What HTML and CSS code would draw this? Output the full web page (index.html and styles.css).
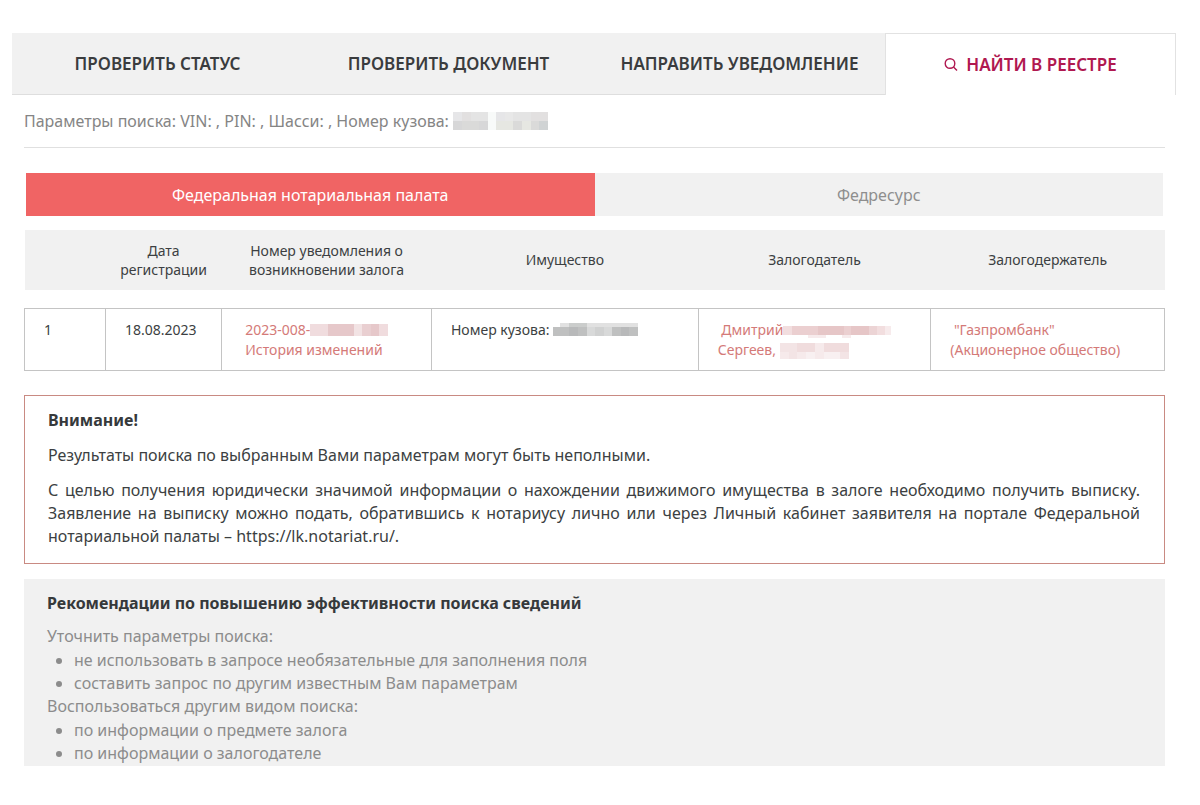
FILE: index.html
```html
<!DOCTYPE html>
<html lang="ru">
<head>
<meta charset="utf-8">
<title>Найти в реестре</title>
<link rel="stylesheet" href="styles.css">
</head>
<body>
<main class="page">
  <nav class="tabs">
    <a class="tab" href="#status">Проверить статус</a>
    <a class="tab" href="#document">Проверить документ</a>
    <a class="tab" href="#notify">Направить уведомление</a>
    <a class="tab tab-active" href="#search" aria-current="page">
      <svg class="icon" viewBox="0 0 14 14" aria-hidden="true"><circle cx="6" cy="5.5" r="4.8"/><path d="M9.5 8.9 13 12.4"/></svg>
      Найти в реестре
    </a>
  </nav>

  <div class="content">
    <p class="params">Параметры поиска: VIN: , PIN: , Шасси: , Номер кузова:
      <svg class="mask mask-params" viewBox="0 0 95 18" aria-hidden="true">
        <path fill="#e6e6e8" d="M0 0h9v9H0zM43 0h9v9h-9z"/><path fill="#e2e0e0" d="M9 0h9v9H9zM78 0h17v9H78z"/><path fill="#e4e4e4" d="M18 0h17v9H18zM60 0h18v9H60z"/><path fill="#e8e8e8" d="M52 0h8v9h-8z"/>
        <path fill="#d7d7d8" d="M0 9h9v9H0zM26 9h9v9h-9z"/><path fill="#dadad9" d="M9 9h17v9H9zM60 9h9v9h-9zM78 9h8v9h-8z"/><path fill="#e6e7e2" d="M43 9h17v9H43zM69 9h9v9h-9z"/><path fill="#d0d3d4" d="M86 9h9v9h-9z"/><path fill="#f8faf9" d="M35 0h8v18h-8z"/>
      </svg>
    </p>

    <div class="sources">
      <button class="source source-active" type="button">Федеральная нотариальная палата</button>
      <button class="source" type="button">Федресурс</button>
    </div>

    <table class="results">
      <colgroup><col class="c-num"><col class="c-date"><col class="c-notice"><col class="c-asset"><col class="c-party"><col></colgroup>
      <thead>
        <tr>
          <th></th>
          <th scope="col">Дата регистрации</th>
          <th scope="col">Номер уведомления о возникновении залога</th>
          <th scope="col">Имущество</th>
          <th scope="col">Залогодатель</th>
          <th scope="col">Залогодержатель</th>
        </tr>
      </thead>
      <tbody>
        <tr>
          <td>1</td>
          <td>18.08.2023</td>
          <td class="wide"><a href="#notice">2023-008-<svg class="mask mask-notice" viewBox="0 0 78 12" aria-hidden="true"><path fill="#f0dcde" d="M0 0h18v12H0zM69 0h9v12h-9z"/><path fill="#e6c8ca" d="M18 0h26v12H18zM61 0h8v12h-8z"/><path fill="#f2e3e4" d="M44 0h8v12h-8z"/><path fill="#e9cfd1" d="M52 0h9v12h-9z"/></svg></a><br><a href="#history">История изменений</a></td>
          <td>Номер кузова: <svg class="mask mask-asset" viewBox="0 0 85 13" aria-hidden="true"><path fill="#e1e1e1" d="M7 0h9v4H7zM34 0h51v4H34z"/><path fill="#cbcdcc" d="M16 0h18v4H16z"/><path fill="#bfc0c0" d="M0 4h16v9H0zM25 4h9v9h-9zM59 4h9v9h-9zM76 4h9v9h-9z"/><path fill="#b8b9ba" d="M16 4h9v9h-9zM68 4h8v9h-8z"/><path fill="#d8d9d9" d="M34 4h8v9h-8zM51 4h8v9h-8z"/><path fill="#d0d1d1" d="M42 4h9v9h-9z"/></svg></td>
          <td><a href="#pledger">&nbsp;Дмитрий<svg class="mask mask-name" viewBox="0 0 108 12" aria-hidden="true"><path fill="#f2dedf" d="M0 0h9v9H0zM94 0h8v9h-8z"/><path fill="#ebcfd0" d="M9 0h26v9H9zM61 0h7v9h-7z"/><path fill="#e6c6c7" d="M35 0h26v9H35zM68 0h18v9H68z"/><path fill="#ecd4d5" d="M86 0h8v9h-8z"/><path fill="#f7ebec" d="M102 0h6v9h-6zM25 9h18v3H25zM59 9h9v3h-9z"/></svg><br>Сергеев, <svg class="mask mask-surname" viewBox="0 0 69 16" aria-hidden="true"><path fill="#f0dcdd" d="M17 0h18v9H17zM44 0h25v9H44z"/><path fill="#f3e4e5" d="M0 0h17v9H0zM9 9h8v7H9zM60 9h9v7h-9z"/><path fill="#f6eaeb" d="M0 9h9v7H0zM35 0h9v9h-9zM17 9h9v7h-9zM35 9h9v7h-9z"/><path fill="#f8f0f1" d="M26 9h9v7h-9zM44 9h16v7H44z"/></svg></a></td>
          <td><a href="#pledgee">&nbsp;"Газпромбанк"<br>(Акционерное общество)</a></td>
        </tr>
      </tbody>
    </table>

    <section class="notice">
      <h2>Внимание!</h2>
      <p>Результаты поиска по выбранным Вами параметрам могут быть неполными.</p>
      <p>С целью получения юридически значимой информации о нахождении движимого имущества в залоге необходимо получить выписку. Заявление на выписку можно подать, обратившись к нотариусу лично или через Личный кабинет заявителя на портале Федеральной нотариальной палаты – https://lk.notariat.ru/.</p>
    </section>

    <section class="tips">
      <h2>Рекомендации по повышению эффективности поиска сведений</h2>
      <p>Уточнить параметры поиска:</p>
      <ul>
        <li>не использовать в запросе необязательные для заполнения поля</li>
        <li>составить запрос по другим известным Вам параметрам</li>
      </ul>
      <p>Воспользоваться другим видом поиска:</p>
      <ul>
        <li>по информации о предмете залога</li>
        <li>по информации о залогодателе</li>
      </ul>
    </section>
  </div>
</main>
</body>
</html>
```
FILE: styles.css
```css
* { box-sizing: border-box; }

body {
  margin: 0;
  background: #fff;
  color: #3c3f42;
  font: 16px/23px "Noto Sans", "Open Sans", sans-serif;
}

h2, p, ul { margin: 0; }
h2 { font-size: 16px; line-height: 23px; font-weight: 700; color: #36393b; }

.page { padding: 33px 24px 39px 12px; }

.tabs {
  display: grid;
  grid-template-columns: repeat(4, 1fr);
}
.tab {
  display: flex;
  align-items: center;
  justify-content: center;
  gap: 8px;
  height: 62px;
  background: #f1f1f1;
  border-bottom: 1px solid #dedede;
  color: #3a3c3e;
  font-size: 17px;
  font-weight: 600;
  text-transform: uppercase;
  text-decoration: none;
}
.tab-active {
  background: #fff;
  border: 1px solid #e2e2e2;
  border-bottom: 0;
  color: #b01850;
}
.icon {
  width: 14px;
  height: 14px;
  fill: none;
  stroke: currentColor;
  stroke-width: 1.4;
}

.content { padding: 0 11px 0 12px; }

.params {
  padding: 15px 0 14px;
  border-bottom: 1px solid #e0e0e0;
  color: #858585;
}

.mask { shape-rendering: crispEdges; }
.mask-params { width: 95px; height: 18px; vertical-align: -3px; }
.mask-notice { width: 78px; height: 12px; vertical-align: -1px; }
.mask-asset { width: 85px; height: 13px; vertical-align: -1px; }
.mask-name { width: 108px; height: 12px; vertical-align: -3px; }
.mask-surname { width: 69px; height: 16px; vertical-align: -4px; }

.sources {
  display: grid;
  grid-template-columns: 1fr 1fr;
  margin: 25px 2px 14px;
}
.source {
  height: 43px;
  padding: 1px 0 0;
  border: 0;
  background: #f1f1f1;
  color: #8e8e8e;
  font: inherit;
}
.source-active { background: #f06464; color: #fff; }

.results {
  width: 100%;
  table-layout: fixed;
  border-collapse: collapse;
  font-size: 14px;
  line-height: 20px;
}
.c-num { width: 7.1%; }
.c-date { width: 10.2%; }
.c-notice { width: 18.4%; }
.c-asset { width: 23.4%; }
.c-party { width: 20.4%; }
.results th {
  height: 60px;
  padding: 0 10px 1px;
  background: #f1f1f1;
  font-weight: 400;
  line-height: 19px;
}
.results tbody::before {
  content: "";
  display: table-row;
  height: 18px;
}
.results td {
  padding: 11px 0 10px 19px;
  border: 1px solid #c4c4c4;
  vertical-align: top;
}
.results .wide { padding-left: 23px; }
.results a { color: #d47a78; text-decoration: none; }

.notice {
  display: grid;
  gap: 12px;
  margin-top: 24px;
  padding: 13px 24px 15px 23px;
  border: 1px solid #c98a82;
  text-align: justify;
}

.tips {
  margin-top: 15px;
  padding: 13px 23px 1px;
  background: #f1f1f1;
  color: #8c8c8c;
}
.tips h2 { margin-bottom: 10px; }
.tips ul { padding: 1px 0 0 27px; }
```
